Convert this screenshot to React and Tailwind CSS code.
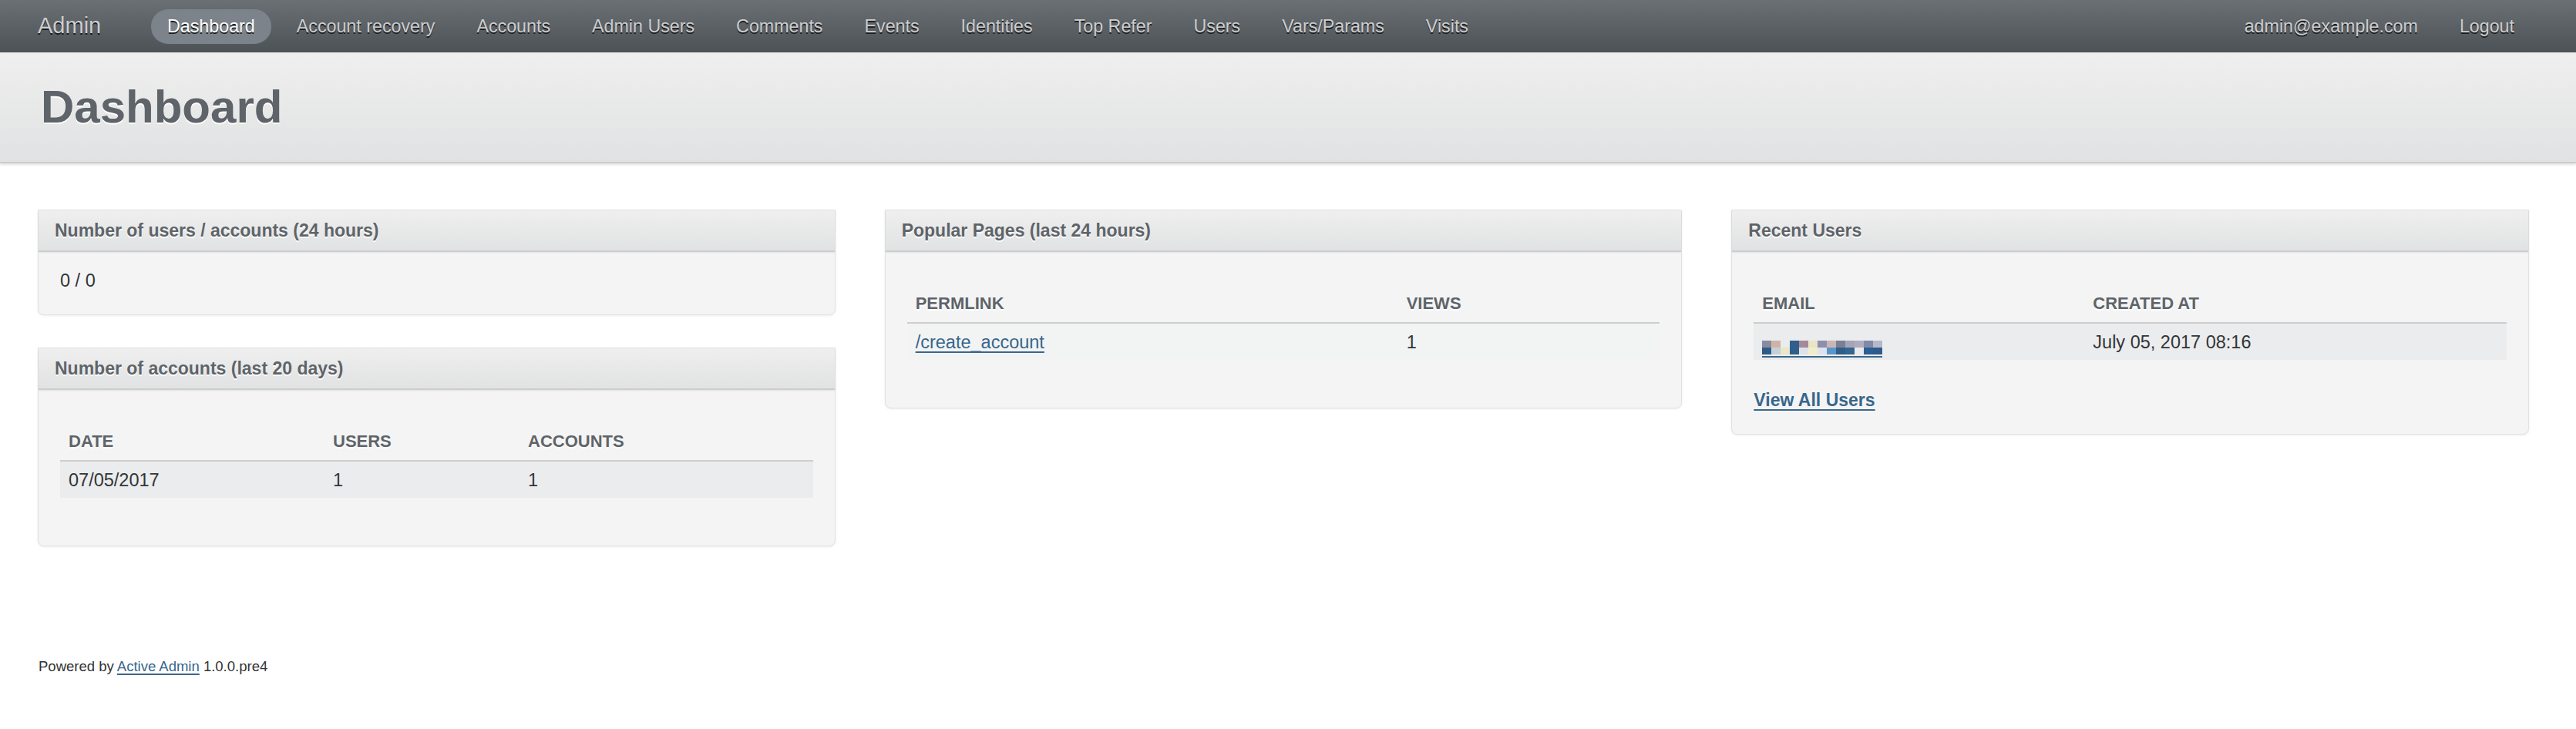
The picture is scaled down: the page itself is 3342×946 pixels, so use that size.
import React from 'react';

const tabs = [
  'Dashboard',
  'Account recovery',
  'Accounts',
  'Admin Users',
  'Comments',
  'Events',
  'Identities',
  'Top Refer',
  'Users',
  'Vars/Params',
  'Visits',
];

const navText = "text-[23.25px] text-[#cdcdcd] [text-shadow:0_2px_0_#1b1d1f]";

const Panel = ({ title, children, className = '' }) => (
  <div className={"bg-[#f4f4f4] border border-[#e2e2e2] rounded-b-[8px] shadow-[0_1px_3px_rgba(0,0,0,0.08)] " + className}>
    <h3 className="h-[54px] flex items-center px-[21px] bg-gradient-to-b from-[#efefef] to-[#e1e2e3] border-b-2 border-[#cdcdcd] shadow-[0_1px_2px_rgba(0,0,0,0.08)] text-[23px] font-bold text-[#5e6469] [text-shadow:0_2px_0_#fff]">
      {title}
    </h3>
    <div className="px-[28px] pt-[20px] pb-[27px]">{children}</div>
  </div>
);

const Th = ({ children, className = '' }) => (
  <th className={"h-[50px] px-[11px] text-left align-middle text-[22px] font-bold uppercase text-[#5e6469] [text-shadow:0_2px_0_#fff] border-b-2 border-[#cdcdcd] " + className}>
    {children}
  </th>
);

const Td = ({ children, className = '' }) => (
  <td className={"h-[48px] px-[11px] pt-[2px] align-middle text-[23.5px] text-[#323537] " + className}>{children}</td>
);

// pixelated (censored) email
const pixels = [
  ['#8a8aa0', '#cfb2a8', 'transparent', '#2f5f8a', '#a48a98', '#e8e4c8', '#8e8fab', '#c9b7b5', '#7a7f95', '#a7a4b6', '#b0acc0', '#818aa6', '#b8b8c8'],
  ['#2d5b86', '#c4d0d8', '#e9e6c9', '#2f5f8a', '#dde2ea', '#f1ecc8', '#dde3ee', '#5b95c8', '#2e5f88', '#336690', '#eaeaec', '#2a5f96', '#2e5a8c'],
];

const Censored = () => (
  <a href="#" className="inline-flex flex-col border-b-2 border-[#38678b] pb-[2px]">
    {pixels.map((row, i) => (
      <span key={i} className="flex">
        {row.map((c, j) => (
          <span key={j} className="w-[12px] h-[9px]" style={{ background: c }} />
        ))}
      </span>
    ))}
  </a>
);

export default function App() {
  return (
    <div className="min-h-screen bg-white font-['Liberation_Sans',Arial,sans-serif]">
      <div className="h-[68px] flex items-center pl-[49px] pr-[59px] bg-gradient-to-b from-[#6b7075] to-[#4d5257]">
        <div className="w-[147px] text-[29px] text-[#cdcdcd] [text-shadow:0_2px_0_#1b1d1f]">Admin</div>
        <ul className="flex items-center gap-[12px]">
          {tabs.map((t, i) => (
            <li
              key={t}
              className={
                i === 0
                  ? "h-[45px] flex items-center px-[21px] rounded-[22px] bg-[#7d838a] text-[23.25px] text-white [text-shadow:0_2px_0_#1b1d1f]"
                  : "h-[45px] flex items-center px-[21px] " + navText
              }
            >
              {t}
            </li>
          ))}
        </ul>
        <ul className="ml-auto flex items-center gap-[12px]">
          <li className={"px-[21px] " + navText}>admin@example.com</li>
          <li className={"px-[21px] " + navText}>Logout</li>
        </ul>
      </div>

      <div className="h-[144px] flex items-center px-[53px] bg-gradient-to-b from-[#efefef] to-[#e1e2e3] border-b-2 border-[#cdcdcd] shadow-[0_2px_3px_rgba(0,0,0,0.12)]">
        <h2 className="text-[60px] font-bold text-[#5e6469] [text-shadow:0_2px_0_#fff]">Dashboard</h2>
      </div>

      <div className="grid grid-cols-3 gap-x-[64px] pl-[49px] pr-[61px] pt-[60px] items-start">
        <div className="flex flex-col gap-[42px]">
          <Panel title="Number of users / accounts (24 hours)">
            <p className="text-[23.5px] leading-[34px] text-[#323537]">0 / 0</p>
          </Panel>
          <Panel title="Number of accounts (last 20 days)">
            <table className="w-full mt-[22px] mb-[35px] border-collapse">
              <thead>
                <tr>
                  <Th className="w-[343px]">Date</Th>
                  <Th className="w-[253px]">Users</Th>
                  <Th>Accounts</Th>
                </tr>
              </thead>
              <tbody>
                <tr className="bg-[#ebeced]">
                  <Td>07/05/2017</Td>
                  <Td>1</Td>
                  <Td>1</Td>
                </tr>
              </tbody>
            </table>
          </Panel>
        </div>

        <Panel title="Popular Pages (last 24 hours)">
          <table className="w-full mt-[22px] mb-[35px] border-collapse">
            <thead>
              <tr>
                <Th className="w-[637px]">Permlink</Th>
                <Th>Views</Th>
              </tr>
            </thead>
            <tbody>
              <tr className="bg-[#f2f3f3]">
                <Td>
                  <a href="#" className="text-[#38678b] underline decoration-2 underline-offset-[4px]">/create_account</a>
                </Td>
                <Td>1</Td>
              </tr>
            </tbody>
          </table>
        </Panel>

        <Panel title="Recent Users">
          <table className="w-full mt-[22px] mb-[35px] border-collapse">
            <thead>
              <tr>
                <Th className="w-[429px]">Email</Th>
                <Th>Created At</Th>
              </tr>
            </thead>
            <tbody>
              <tr className="bg-[#ebeced]">
                <Td><Censored /></Td>
                <Td>July 05, 2017 08:16</Td>
              </tr>
            </tbody>
          </table>
          <a href="#" className="block w-fit text-[23px] leading-[34px] font-bold text-[#38678b] underline decoration-2 underline-offset-[4px]">
            View All Users
          </a>
        </Panel>
      </div>

      <div className="pl-[50px] mt-[142px] text-[18.5px] leading-[27px] text-[#333]">
        Powered by{' '}
        <a href="#" className="text-[#38678b] underline decoration-2 underline-offset-[3px]">Active Admin</a>{' '}
        1.0.0.pre4
      </div>
    </div>
  );
}
